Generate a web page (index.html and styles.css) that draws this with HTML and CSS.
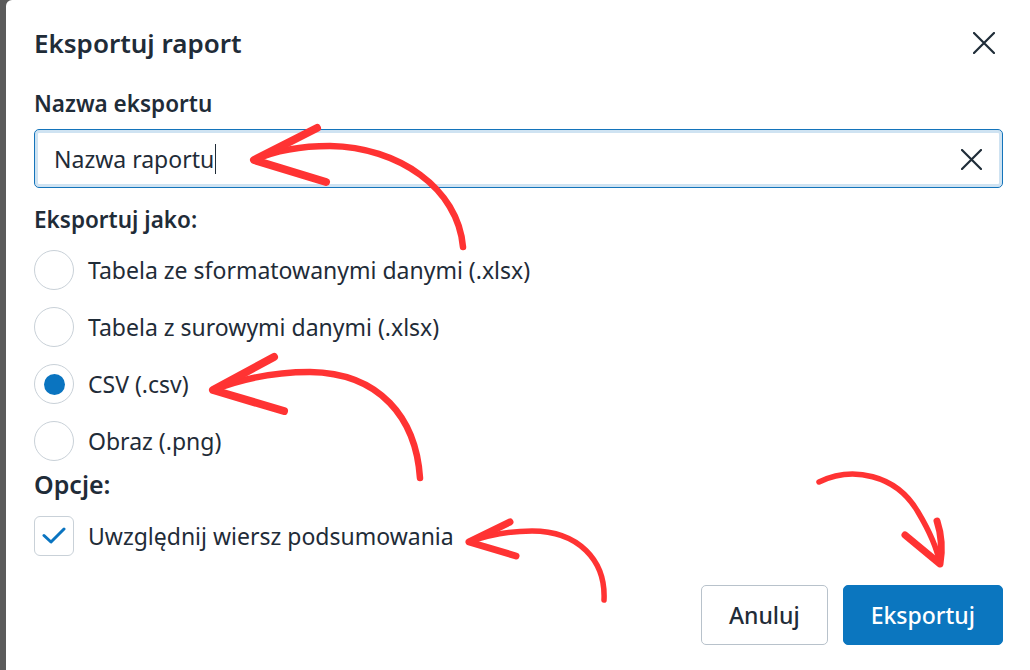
FILE: index.html
```html
<!DOCTYPE html>
<html lang="pl">
<head>
    <meta charset="UTF-8">
    <meta name="viewport" content="width=device-width, initial-scale=1.0">
    <title>Eksportuj raport</title>
    <link rel="stylesheet" href="styles.css">
</head>
<body>

    <!-- Export dialog -->
    <div class="dialog">
        <div class="dialog-header">
            <h2 class="dialog-title">Eksportuj raport</h2>
            <button class="icon-btn close-btn" aria-label="Zamknij">
                <svg width="22" height="22" viewBox="0 0 22 22"><path d="M1 1L21 21M21 1L1 21" stroke="#1f2c38" stroke-width="2.2" stroke-linecap="round"/></svg>
            </button>
        </div>

        <div class="field-label">Nazwa eksportu</div>
        <div class="text-input">
            <span class="input-value">Nazwa raportu</span><span class="caret"></span>
            <button class="icon-btn clear-btn" aria-label="Wyczyść">
                <svg width="21" height="21" viewBox="0 0 21 21"><path d="M1 1L20 20M20 1L1 20" stroke="#1f2c38" stroke-width="2.2" stroke-linecap="round"/></svg>
            </button>
        </div>

        <div class="field-label group-label">Eksportuj jako:</div>
        <ul class="radio-list">
            <li class="choice-row"><span class="radio"></span>Tabela ze sformatowanymi danymi (.xlsx)</li>
            <li class="choice-row"><span class="radio"></span>Tabela z surowymi danymi (.xlsx)</li>
            <li class="choice-row"><span class="radio checked"></span>CSV (.csv)</li>
            <li class="choice-row"><span class="radio"></span>Obraz (.png)</li>
        </ul>

        <div class="options-label">Opcje:</div>
        <div class="choice-row check-row">
            <span class="checkbox">
                <svg width="24" height="18" viewBox="0 0 24 18"><path d="M2 8.5L9 15L22 2" fill="none" stroke="#0a74c0" stroke-width="3" stroke-linecap="round" stroke-linejoin="round"/></svg>
            </span>
            Uwzględnij wiersz podsumowania
        </div>

        <div class="dialog-footer">
            <button class="btn btn-secondary">Anuluj</button>
            <button class="btn btn-primary">Eksportuj</button>
        </div>
    </div>

    <!-- Hand-drawn annotation arrows -->
    <svg class="annotations" width="1030" height="670" viewBox="0 0 1030 670">
        <g fill="none" stroke="#ff3333" stroke-linecap="round" stroke-linejoin="round">
            <!-- to the name input -->
            <path d="M463 247C458 188 398 147 330 146C298 146 272 152 254 160" stroke-width="6.5"/>
            <path d="M317 128L254 160L326 182" stroke-width="8"/>
            <!-- to CSV -->
            <path d="M420 478C416 418 380 373 310 372C270 372 236 381 213 390" stroke-width="6.5"/>
            <path d="M274 357L213 390L284 411" stroke-width="8"/>
            <!-- to summary row -->
            <path d="M604 600C606 560 578 531 532 531C506 531 486 536 469 542" stroke-width="5.5"/>
            <path d="M510 522L469 542L516 556" stroke-width="7"/>
            <!-- to export button -->
            <path d="M819 482C852 466 896 474 918 512C930 532 937 548 940 564" stroke-width="5.5"/>
            <path d="M937 521C942 536 942 552 940 564L905 535" stroke-width="7"/>
        </g>
    </svg>

</body>
</html>
```

FILE: styles.css
```css
body {
    margin: 0;
    padding: 0;
    background-color: #5b5b5b;
    font-family: "Noto Sans", "Open Sans", sans-serif;
    color: #1f2c38;
    overflow: hidden;
    position: relative;
    height: 670px;
}
.dialog {
    margin-left: 6px;
    height: 700px;
    background-color: #ffffff;
    border-top-left-radius: 6px;
    padding: 27px 27px 0 28px;
    box-sizing: border-box;
}
.dialog-header {
    display: flex;
    justify-content: space-between;
    align-items: center;
    height: 32px;
}
.dialog-title {
    margin: 0;
    font-size: 26px;
    font-weight: 600;
    line-height: 32px;
}
.icon-btn {
    background: none;
    border: none;
    padding: 0;
    cursor: pointer;
    display: flex;
}
.close-btn {
    margin-right: 8px;
}
.field-label {
    margin-top: 31px;
    font-size: 22.5px;
    font-weight: 600;
    line-height: 28px;
}
.text-input {
    margin-top: 11px;
    height: 59px;
    box-sizing: border-box;
    border: 1px solid #1474bb;
    border-radius: 5px;
    box-shadow: inset 0 0 0 3px #cfe3f2;
    display: flex;
    align-items: center;
    padding: 1px 20px 0 19px;
    font-size: 23px;
}
.caret {
    display: inline-block;
    width: 1px;
    height: 30px;
    background-color: #1f2c38;
    margin-left: 1px;
}
.clear-btn {
    margin-left: auto;
}
.group-label {
    margin-top: 18px;
}
.radio-list {
    list-style: none;
    margin: 16px 0 0;
    padding: 0;
    display: flex;
    flex-direction: column;
    gap: 17px;
}
.choice-row {
    display: flex;
    align-items: center;
    gap: 14px;
    height: 40px;
    font-size: 23px;
}
.radio {
    width: 40px;
    height: 40px;
    box-sizing: border-box;
    border: 1px solid #c9d1d8;
    border-radius: 50%;
    display: flex;
    align-items: center;
    justify-content: center;
}
.radio.checked::after {
    content: "";
    width: 21px;
    height: 21px;
    border-radius: 50%;
    background-color: #0a74c0;
}
.options-label {
    margin-top: 8px;
    font-size: 25px;
    font-weight: 600;
    line-height: 30px;
}
.check-row {
    margin-top: 17px;
}
.checkbox {
    width: 40px;
    height: 40px;
    box-sizing: border-box;
    border: 1px solid #c9d1d8;
    border-radius: 6px;
    display: flex;
    align-items: center;
    justify-content: center;
}
.dialog-footer {
    margin-top: 29px;
    display: flex;
    justify-content: flex-end;
    gap: 15px;
}
.btn {
    height: 60px;
    padding: 0 27px;
    border-radius: 5px;
    font-family: inherit;
    font-size: 23px;
    font-weight: 500;
    cursor: pointer;
}
.btn-secondary {
    background-color: #ffffff;
    border: 1px solid #b8c2cb;
    color: #1f2c38;
}
.btn-primary {
    background-color: #0b76bf;
    border: 1px solid #0b76bf;
    color: #ffffff;
}
.annotations {
    position: absolute;
    top: 0;
    left: 0;
    pointer-events: none;
}
```
